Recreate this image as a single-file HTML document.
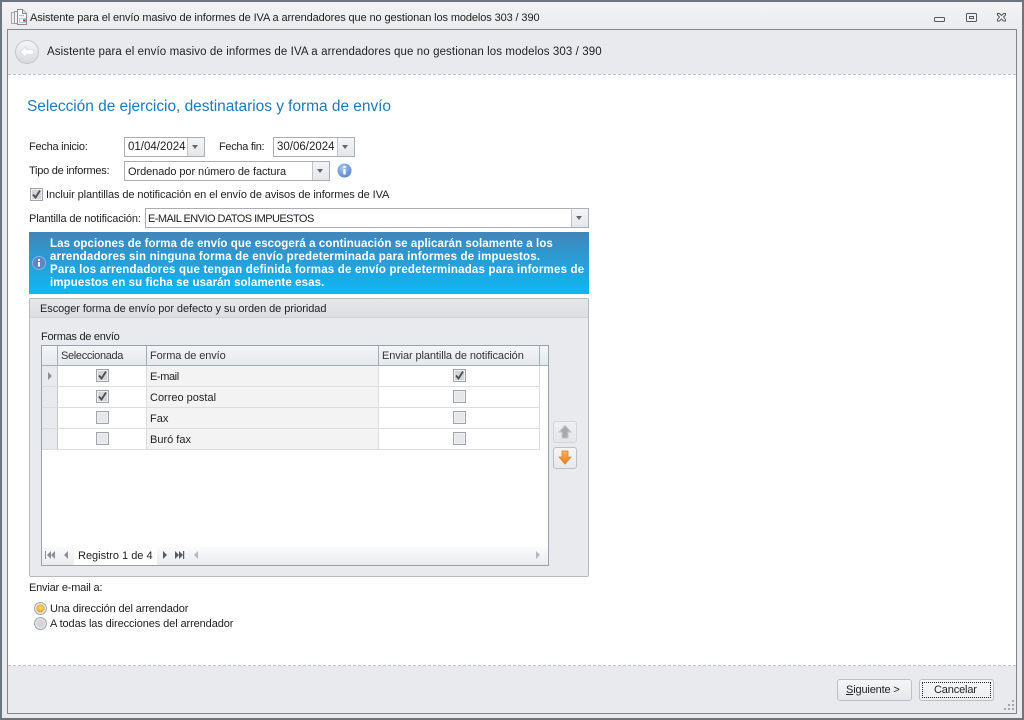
<!DOCTYPE html>
<html><head><meta charset="utf-8"><style>
html,body{margin:0;padding:0;background:#fff}
body{width:1024px;height:720px;position:relative;overflow:hidden;font:11px/13px "DejaVu Sans",sans-serif;color:#1e1e1e}
.a{position:absolute;box-sizing:border-box}
.t{position:absolute;white-space:nowrap;font:11px/14px "Liberation Sans",sans-serif;color:#222}
.w{color:#fff;font-weight:bold;font-size:11.5px;line-height:13px;left:50px}
.box{position:absolute;box-sizing:border-box;border:1px solid #abafb5;background:#fff}
.btn{position:absolute;top:0;right:0;bottom:0;width:16px;background:linear-gradient(#f4f5f6,#e4e6ea);border-left:1px solid #c0c3c8}
.btn:after{content:"";position:absolute;left:4px;top:50%;margin-top:-2px;border:3.5px solid transparent;border-top:4px solid #666;border-bottom:0}
.cb{position:absolute;box-sizing:border-box;width:13px;height:13px;border:1px solid #a0a4aa;background:#e6e7e9;box-shadow:inset 0 0 0 1px #f0f0f1}
.cb.on{background:#d4d5d8}
.cb svg{position:absolute;left:0;top:0}
</style></head><body>
<!-- window frame -->
<div class="a" style="left:0;top:0;width:1024px;height:720px;background:#e8eaee;border:2px solid #6e747c"></div>
<div class="a" style="left:2px;top:2px;width:1020px;height:28px;background:linear-gradient(#f2f3f4,#e9ebee)"></div>
<!-- titlebar icon -->
<svg class="a" style="left:10px;top:9px" width="18" height="17" viewBox="0 0 18 17"><path d="M1.500 3.500h3v11h-3z" fill="#eceeef" stroke="#a6a9ad"/><path d="M4.500 2.500h3v12h-3z" fill="#f2f3f4" stroke="#9a9da2"/><path d="M7.500 .5h5l4 4v11h-9z" fill="#fbfbfb" stroke="#858b92"/><path d="M12.500 .5v4h4" fill="#e2e3e5" stroke="#858b92"/><rect x="9.500" y="9.500" width="6" height="4" fill="#fff" stroke="#aab8c8" stroke-width=".8"/><rect x="13" y="10.500" width="2.500" height="2" fill="#d8202f"/><path d="M9 6.500h5" stroke="#a8c0dc"/></svg>
<div class="t" style="left:30px;top:11px;letter-spacing:-.11px">Asistente para el envío masivo de informes de IVA a arrendadores que no gestionan los modelos 303 / 390</div>
<!-- window buttons -->
<svg class="a" style="left:930px;top:8px" width="80" height="18" viewBox="0 0 80 18" fill="none" stroke="#535a62"><rect x="4.500" y="9.500" width="10" height="4" rx="1" fill="#eef0f2"/><rect x="36.500" y="5.500" width="10" height="8" rx="1" fill="#eef0f2"/><rect x="39.500" y="8.500" width="4" height="2"/><path d="M67.500 5.500l2 0 2 2 2-2 2 0v1.500l-2 2 2 2.500v1.500h-2l-2-2-2 2h-2v-1.500l2-2.500-2-2z" fill="#f3f4f5"/></svg>
<!-- inner -->
<div class="a" style="left:7px;top:29px;width:1010px;height:685px;border:1px solid #80868d;background:#e8eaee"></div>
<div class="a" style="left:8px;top:74px;width:1008px;height:592px;background:#fff;border-top:1px dashed #c0c3c7;border-bottom:1px dashed #c0c3c7"></div>
<!-- back button -->
<svg class="a" style="left:14px;top:39px" width="26" height="26" viewBox="0 0 26 26"><defs><linearGradient id="g" x1="0" y1="0" x2="0" y2="1"><stop offset="0" stop-color="#f5f6f7"/><stop offset="1" stop-color="#d6d9de"/></linearGradient></defs><circle cx="13" cy="13" r="11.500" fill="url(#g)" stroke="#c3c6cb"/><path d="M6 13l6-5.500v3h7.500v5H12v3z" fill="#fdfdfd" stroke="#dcdfe3"/></svg>
<div class="t" style="left:47px;top:45px;letter-spacing:.1px;font-size:11.5px">Asistente para el envío masivo de informes de IVA a arrendadores que no gestionan los modelos 303 / 390</div>
<div class="t" style="left:27px;top:97px;font-size:15.500px;line-height:20px;color:#1e7ab8;letter-spacing:-.04px">Selección de ejercicio, destinatarios y forma de envío</div>
<!-- form -->
<div class="t" style="left:29px;top:140px;letter-spacing:-.25px">Fecha inicio:</div>
<div class="box" style="left:124px;top:137px;width:81px;height:20px"><span class="t" style="left:3px;top:2px;font-size:11.5px">01/04/2024</span><div class="btn"></div></div>
<div class="t" style="left:219px;top:140px;letter-spacing:-.3px">Fecha fin:</div>
<div class="box" style="left:273px;top:137px;width:82px;height:20px"><span class="t" style="left:3px;top:2px;font-size:11.5px">30/06/2024</span><div class="btn"></div></div>
<div class="t" style="left:29px;top:164px;letter-spacing:-.25px">Tipo de informes:</div>
<div class="box" style="left:124px;top:161px;width:206px;height:20px"><span class="t" style="left:3px;top:3px;letter-spacing:-.07px">Ordenado por número de factura</span><div class="btn"></div></div>
<svg class="a" style="left:337px;top:163px" width="15" height="15" viewBox="0 0 15 15"><defs><radialGradient id="i" cx=".4" cy=".3" r=".8"><stop offset="0" stop-color="#a9c6ee"/><stop offset="1" stop-color="#4f7fc8"/></radialGradient></defs><circle cx="7.500" cy="7.500" r="7" fill="url(#i)"/><rect x="6.300" y="6" width="2.400" height="5.500" fill="#fff"/><rect x="6.300" y="3" width="2.400" height="2" fill="#fff"/></svg>
<div class="cb on" style="left:30px;top:188px"><svg width="11" height="11"><path d="M2 5.500l2.500 3L9 1.500" fill="none" stroke="#4a4d52" stroke-width="1.800"/></svg></div>
<div class="t" style="left:46px;top:188px;letter-spacing:-.1px">Incluir plantillas de notificación en el envío de avisos de informes de IVA</div>
<div class="t" style="left:29px;top:212px;letter-spacing:-.12px">Plantilla de notificación:</div>
<div class="box" style="left:145px;top:208px;width:444px;height:20px"><span class="t" style="left:2px;top:3px;letter-spacing:-.55px">E-MAIL ENVIO DATOS IMPUESTOS</span><div class="btn"></div></div>
<!-- banner -->
<div class="a" style="left:29px;top:232px;width:560px;height:62px;background:linear-gradient(#4285ba,#0db8f6)"></div>
<svg class="a" style="left:32px;top:256px" width="14" height="14" viewBox="0 0 14 14"><circle cx="7" cy="7" r="6.500" fill="#5d86c8" stroke="#8fb0e0"/><rect x="6" y="6" width="2" height="4.500" fill="#fff"/><rect x="6" y="3" width="2" height="2" fill="#fff"/></svg>
<div class="t w" style="top:238px;letter-spacing:.08px">Las opciones de forma de envío que escogerá a continuación se aplicarán solamente a los</div>
<div class="t w" style="top:251px;letter-spacing:.18px">arrendadores sin ninguna forma de envío predeterminada para informes de impuestos.</div>
<div class="t w" style="top:264px;letter-spacing:.2px">Para los arrendadores que tengan definida formas de envío predeterminadas para informes de</div>
<div class="t w" style="top:277px;letter-spacing:.1px">impuestos en su ficha se usarán solamente esas.</div>
<!-- group -->
<div class="a" style="left:29px;top:298px;width:560px;height:279px;border:1px solid #b6babf;border-radius:2px;background:#e8eaee"></div>
<div class="a" style="left:30px;top:299px;width:558px;height:19px;background:linear-gradient(#e6e8eb,#dcdfe2);border-bottom:1px solid #cfd2d6"></div>
<div class="t" style="left:40px;top:302px;letter-spacing:-.07px">Escoger forma de envío por defecto y su orden de prioridad</div>
<div class="t" style="left:41px;top:330px;letter-spacing:-.27px">Formas de envío</div>
<!-- grid -->
<div class="a" style="left:41px;top:345px;width:508px;height:221px;border:1px solid #98a2ad;background:#fff"></div>
<div class="a" style="left:42px;top:346px;width:506px;height:20px;background:linear-gradient(#f3f5f7,#e6e9ed);border-bottom:1px solid #a5adb7"></div>
<div class="a" style="left:57px;top:346px;width:1px;height:20px;background:#a5adb7"></div>
<div class="a" style="left:146px;top:346px;width:1px;height:20px;background:#a5adb7"></div>
<div class="a" style="left:378px;top:346px;width:1px;height:20px;background:#a5adb7"></div>
<div class="a" style="left:539px;top:346px;width:1px;height:20px;background:#a5adb7"></div>
<div class="t" style="left:61px;top:349px;color:#333;letter-spacing:-.33px">Seleccionada</div>
<div class="t" style="left:150px;top:349px;color:#333;letter-spacing:-.1px">Forma de envío</div>
<div class="t" style="left:382px;top:349px;color:#333;letter-spacing:-.1px">Enviar plantilla de notificación</div>
<!-- rows -->
<div class="a" style="left:42px;top:366px;width:16px;height:84px;background:#e8eaee;border-right:1px solid #c2c7cd"></div>
<div class="a" style="left:147px;top:366px;width:232px;height:84px;background:#f3f3f4"></div>
<div class="a" style="left:42px;top:386px;width:498px;height:1px;background:#dcdddf"></div>
<div class="a" style="left:42px;top:407px;width:498px;height:1px;background:#dcdddf"></div>
<div class="a" style="left:42px;top:428px;width:498px;height:1px;background:#dcdddf"></div>
<div class="a" style="left:42px;top:449px;width:498px;height:1px;background:#dcdddf"></div>
<div class="a" style="left:146px;top:366px;width:1px;height:84px;background:#dcdddf"></div>
<div class="a" style="left:378px;top:366px;width:1px;height:84px;background:#dcdddf"></div>
<div class="a" style="left:539px;top:366px;width:1px;height:84px;background:#dcdddf"></div>
<div class="a" style="left:48px;top:372px;border:4px solid transparent;border-left:4px solid #8a8f96;border-right:0"></div>
<div class="cb on" style="left:96px;top:369px"><svg width="11" height="11"><path d="M2 5.500l2.500 3L9 1.500" fill="none" stroke="#4a4d52" stroke-width="1.800"/></svg></div>
<div class="cb on" style="left:96px;top:390px"><svg width="11" height="11"><path d="M2 5.500l2.500 3L9 1.500" fill="none" stroke="#4a4d52" stroke-width="1.800"/></svg></div>
<div class="cb" style="left:96px;top:411px"></div>
<div class="cb" style="left:96px;top:432px"></div>
<div class="cb on" style="left:453px;top:369px"><svg width="11" height="11"><path d="M2 5.500l2.500 3L9 1.500" fill="none" stroke="#4a4d52" stroke-width="1.800"/></svg></div>
<div class="cb" style="left:453px;top:390px"></div>
<div class="cb" style="left:453px;top:411px"></div>
<div class="cb" style="left:453px;top:432px"></div>
<div class="t" style="left:150px;top:370px;letter-spacing:-.4px">E-mail</div>
<div class="t" style="left:150px;top:391px">Correo postal</div>
<div class="t" style="left:150px;top:412px">Fax</div>
<div class="t" style="left:150px;top:433px">Buró fax</div>
<!-- navigator -->
<div class="a" style="left:42px;top:547px;width:506px;height:18px;background:linear-gradient(#fbfbfc,#e9ebee)"></div>
<div class="a" style="left:74px;top:547px;width:83px;height:18px;background:#fff"></div>
<svg class="a" style="left:44px;top:551px" width="30" height="10" fill="#8b9097"><path d="M1 0h1v8H1zM7 0v8L3 4zM11 0v8L7 4zM24 0v8l-4-4z"/></svg>
<div class="t" style="left:78px;top:549px">Registro 1 de 4</div>
<svg class="a" style="left:160px;top:551px" width="30" height="10" fill="#555b63"><path d="M3 0v8l4-4zM15 0v8l4-4zM19 0v8l4-4zM23 0h1.200v8H23z"/></svg>
<svg class="a" style="left:192px;top:551px" width="350" height="10" fill="#b5b8bd"><path d="M6 0v8L2 4zM344 0v8l4-4z"/></svg>
<!-- arrows -->
<div class="a" style="left:553px;top:421px;width:24px;height:22px;border:1px solid #d3d5d9;border-radius:3px;background:linear-gradient(#eef0f2,#e4e6ea)"></div>
<svg class="a" style="left:557px;top:424px" width="16" height="16" viewBox="0 0 16 16"><path d="M8 1.500l6 6.500h-3v6H5V8H2z" fill="#a7a9ab" stroke="#c4c6c9"/></svg>
<div class="a" style="left:553px;top:447px;width:24px;height:22px;border:1px solid #bcc0c6;border-radius:3px;background:linear-gradient(#f5f6f7,#e6e8eb)"></div>
<svg class="a" style="left:557px;top:450px" width="16" height="16" viewBox="0 0 16 16"><defs><linearGradient id="o" x1="0" y1="0" x2="0" y2="1"><stop offset="0" stop-color="#fbb45a"/><stop offset="1" stop-color="#ee7a12"/></linearGradient></defs><path d="M5 1h6v6h3l-6 7-6-7h3z" fill="url(#o)" stroke="#d9822b" stroke-width=".8"/></svg>
<!-- radios -->
<div class="t" style="left:29px;top:581px;letter-spacing:-.2px">Enviar e-mail a:</div>
<svg class="a" style="left:33px;top:602px" width="15" height="30" viewBox="0 0 15 30"><defs><radialGradient id="r1" cx=".5" cy=".4" r=".6"><stop offset="0" stop-color="#ffd96a"/><stop offset="1" stop-color="#eda91e"/></radialGradient></defs><circle cx="7.500" cy="6.500" r="6" fill="#e6e8ea" stroke="#a4a7ab"/><circle cx="7.500" cy="6.500" r="3.800" fill="url(#r1)" stroke="#d8a030" stroke-width=".5"/><circle cx="7.500" cy="21.500" r="6" fill="#e2e4e6" stroke="#a4a7ab"/><circle cx="7.500" cy="21.500" r="4" fill="#d4d6d8"/></svg>
<div class="t" style="left:50px;top:602px;letter-spacing:-.13px">Una dirección del arrendador</div>
<div class="t" style="left:50px;top:617px;letter-spacing:-.1px">A todas las direcciones del arrendador</div>
<!-- buttons -->
<div class="a" style="left:837px;top:679px;width:75px;height:22px;border:1px solid #bcc0c6;border-radius:3px;background:linear-gradient(#f5f6f7,#e5e7ea)"></div>
<div class="t" style="left:846px;top:683px;letter-spacing:-.15px"><u>S</u>iguiente &gt;</div>
<div class="a" style="left:919px;top:679px;width:75px;height:22px;border:1px solid #bcc0c6;border-radius:3px;background:linear-gradient(#f9f9fa,#eceef0)"></div>
<div class="a" style="left:922px;top:682px;width:69px;height:16px;border:1px dotted #222"></div>
<div class="t" style="left:934px;top:683px;letter-spacing:-.15px">Cancelar</div>
<!-- grip -->
<svg class="a" style="left:1004px;top:700px" width="12" height="12" fill="#a3a7ac"><path d="M8 0h2v2H8zM4 4h2v2H4zM8 4h2v2H8zM0 8h2v2H0zM4 8h2v2H4zM8 8h2v2H8z"/></svg>
</body></html>
